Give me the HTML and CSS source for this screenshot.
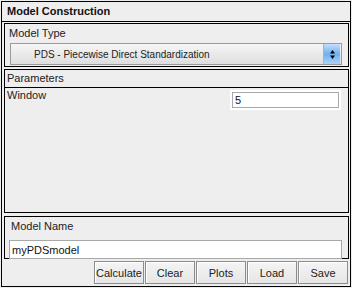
FILE: index.html
```html
<!DOCTYPE html>
<html lang="en">
<head>
    <meta charset="UTF-8">
    <title>Model Construction</title>
    <link rel="stylesheet" href="styles.css">
</head>
<body>
    <div class="window">
        <div class="title">Model Construction</div>
        <div class="content">
            <div class="panel model-type">
                <div class="label">Model Type</div>
                <div class="combo">
                    <span class="combo-text">PDS - Piecewise Direct Standardization</span>
                    <span class="combo-arrows">
                        <svg width="7" height="11" viewBox="0 0 7 11">
                            <path d="M3.5 1 L6 4.5 L1 4.5 Z" fill="#000"/>
                            <path d="M3.5 10 L6 6.5 L1 6.5 Z" fill="#000"/>
                        </svg>
                    </span>
                </div>
            </div>

            <div class="panel params">
                <div class="params-head">Parameters</div>
                <div class="param-row">
                    <span>Window</span>
                    <input class="field small" type="text" value="5">
                </div>
            </div>

            <div class="panel model-name">
                <div class="label">Model Name</div>
                <input class="field wide" type="text" value="myPDSmodel">
            </div>

            <div class="buttons">
                <button>Calculate</button>
                <button>Clear</button>
                <button>Plots</button>
                <button>Load</button>
                <button>Save</button>
            </div>
        </div>
    </div>
</body>
</html>
```

FILE: styles.css
```css
body {
    margin: 0;
    padding: 1px;
    background-color: #eeeeee;
    font-family: "Liberation Sans", Arial, sans-serif;
    font-size: 11px;
    color: #222222;
}

.window {
    width: 350px;
    height: 286px;
    box-sizing: border-box;
    border: 1px solid #000000;
    background-color: #eeeeee;
}

.title {
    height: 19px;
    line-height: 19px;
    padding-left: 5px;
    font-weight: bold;
    color: #111111;
    border-bottom: 1px solid #000000;
}

.content {
    padding: 1px 1px 0 2px;
    display: flex;
    flex-direction: column;
}

.panel {
    border: 1px solid #000000;
    box-sizing: border-box;
}

.label {
    padding: 3px 0 0 4px;
    height: 13px;
    line-height: 13px;
}

/* Model type combo */
.model-type {
    height: 44px;
}

.combo {
    margin: 3px 6px 0 5px;
    height: 22px;
    box-sizing: border-box;
    border: 1px solid #9a9a9a;
    background: linear-gradient(#f6f6f6, #dedede);
    display: flex;
    align-items: center;
    justify-content: space-between;
}

.combo-text {
    padding-left: 23px;
    font-size: 10px;
}

.combo-arrows {
    width: 16px;
    height: 20px;
    margin-right: 1px;
    border-left: 1px solid #9fb4d2;
    background: linear-gradient(#c4e0fa, #6fb0ee 50%, #a9d3f8);
    display: flex;
    align-items: center;
    justify-content: center;
}

/* Parameters */
.params {
    margin-top: 2px;
    height: 144px;
}

.params-head {
    height: 17px;
    line-height: 16px;
    padding-left: 2px;
    border-bottom: 1px solid #000000;
}

.param-row {
    display: flex;
    justify-content: space-between;
    align-items: flex-start;
    padding: 1px 9px 0 2px;
}

.field {
    font-family: "Liberation Sans", Arial, sans-serif;
    font-size: 11px;
    color: #111111;
    background-color: #ffffff;
    border: 1px solid #a8a8a8;
    box-sizing: border-box;
    padding: 0 2px;
    margin: 0;
    outline: none;
}

.field.small {
    width: 107px;
    height: 16px;
    margin-top: 3px;
    box-shadow: 0 0 0 2px #ffffff;
}

/* Model name */
.model-name {
    margin-top: 3px;
    height: 43px;
}

.model-name .label {
    padding-left: 6px;
}

.field.wide {
    display: block;
    width: 333px;
    height: 19px;
    margin: 7px 0 0 4px;
}

/* Buttons */
.buttons {
    display: flex;
    justify-content: flex-end;
    gap: 1px;
    margin-top: 2px;
    padding-right: 1px;
}

button {
    width: 50px;
    height: 23px;
    padding: 0;
    font-family: "Liberation Sans", Arial, sans-serif;
    font-size: 11px;
    color: #222222;
    border: 1px solid #8c8c8c;
    border-radius: 0;
    background: linear-gradient(#f4f4f4, #e6e6e6);
    box-shadow: inset 1px 1px 0 #ffffff;
}
```
